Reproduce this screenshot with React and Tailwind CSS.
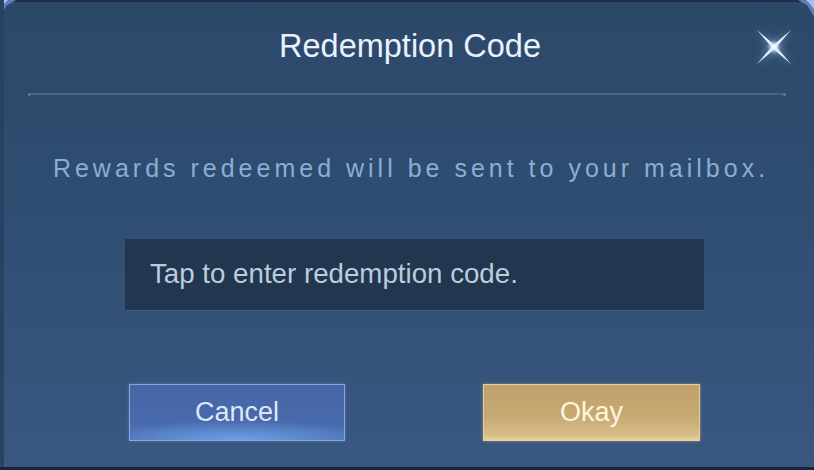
import React from 'react';

const CloseStar = () => (
  <svg width="38" height="36" viewBox="0 0 38 36" className="block drop-shadow-[0_0_4px_rgba(170,210,255,0.8)]">
    <defs>
      <radialGradient id="glow" cx="50%" cy="50%" r="50%">
        <stop offset="0%" stopColor="#ffffff" stopOpacity="1" />
        <stop offset="35%" stopColor="#eaf5ff" stopOpacity="0.8" />
        <stop offset="100%" stopColor="#9cc4f0" stopOpacity="0" />
      </radialGradient>
    </defs>
    <path d="M2 1 L19 15.5 L36 1 L21.5 18 L36 35 L19 20.5 L2 35 L16.5 18 Z" fill="#e4f1ff" />
    <circle cx="19" cy="18" r="7" fill="url(#glow)" />
  </svg>
);

const Corner = ({ flip }) => (
  <svg width="18" height="16" viewBox="0 0 18 16" className={`block ${flip ? '-scale-x-100' : ''}`}>
    <path d="M0 0 H16 L11 3 L7 5 L4 10 L1 15 L0 16 Z" fill="#6f8fd0" opacity="0.8" />
    <path d="M0 0 H8 L4 4 L0 9 Z" fill="#a9c0ef" />
  </svg>
);

export default function App() {
  return (
    <div
      className="relative w-[814px] h-[470px] overflow-hidden flex flex-col bg-[linear-gradient(180deg,#2c4869_0%,#2f4d71_40%,#3a5880_100%)]"
      style={{ fontFamily: '"Liberation Sans", Arial, sans-serif' }}
    >
      {/* top frame edge */}
      <div className="h-[2px] bg-[#1f2d45] shrink-0" />
      <div className="absolute left-0 top-0"><Corner /></div>
      <div className="absolute right-0 top-0"><Corner flip /></div>
      <div className="absolute left-0 top-0 bottom-0 w-[4px] bg-[#2a4262]" />

      {/* header */}
      <div className="relative pt-[28px] pl-[6px]">
        <h1 className="text-center text-[32.5px] leading-none text-[#e9f1fb]">Redemption Code</h1>
        <button className="absolute right-[21px] top-[27px]">
          <CloseStar />
        </button>
      </div>

      {/* divider */}
      <div className="mt-[30px] mx-[28px] flex items-center">
        <div className="w-[3px] h-[3px] rounded-full bg-[#5a7aa2]" />
        <div className="flex-1 h-[1.5px] bg-[#44648b]" />
        <div className="w-[3px] h-[3px] rounded-full bg-[#5a7aa2]" />
      </div>

      <p className="mt-[60px] pl-[8px] text-center text-[25px] leading-none tracking-[4px] text-[#8cadd6]">
        Rewards redeemed will be sent to your mailbox.
      </p>

      {/* input */}
      <div className="mt-[58px] ml-[125px] w-[579px] h-[71px] bg-[#23364f] flex items-center pl-[25px] shadow-[0_1px_0_rgba(80,110,150,0.4)]">
        <span className="text-[27.7px] text-[#bccbdd]">Tap to enter redemption code.</span>
      </div>

      {/* buttons */}
      <div className="mt-[74px] ml-[129px] flex gap-[138px]">
        <button className="w-[216px] h-[57px] border border-[#86a6dc] bg-[radial-gradient(ellipse_65%_35%_at_50%_100%,#6f9fe6_0%,rgba(100,150,230,0)_100%),linear-gradient(180deg,#4766a7_0%,#4869ab_60%,#4d73b6_100%)] shadow-[0_0_3px_rgba(120,160,230,0.5)] text-[27px] text-[#dce8f8]">
          Cancel
        </button>
        <button className="w-[217px] h-[57px] border border-[#e6d09a] bg-[linear-gradient(180deg,#c1a16c_0%,#c6a873_55%,#d6bc86_90%,#e8d29c_100%)] shadow-[0_0_3px_rgba(230,200,140,0.5)] text-[27px] text-[#fff5df]">
          Okay
        </button>
      </div>

      <div className="absolute left-0 right-0 bottom-0 h-[3px] bg-[#18243a]" />
    </div>
  );
}
